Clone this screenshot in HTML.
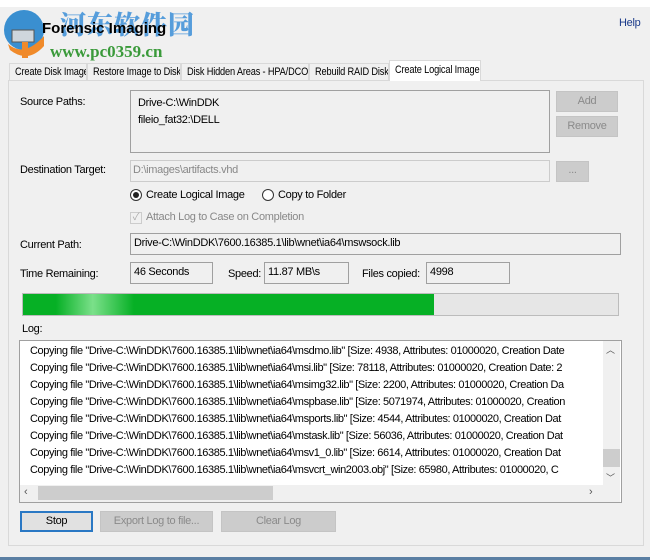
<!DOCTYPE html>
<html><head><meta charset="utf-8"><style>
*{box-sizing:border-box;margin:0;padding:0}
body{width:650px;height:560px;background:#f0f0f0;font-family:"Liberation Sans","Noto Sans CJK SC",sans-serif;font-size:11px;color:#000;position:relative;overflow:hidden;letter-spacing:-0.3px}
.a{position:absolute;white-space:nowrap}
.box{position:absolute;border:1px solid #a0a0a0;background:#f0f0f0}
.btn{position:absolute;background:#cccccc;border:1px solid #c4c4c4;color:#8a8a8a;text-align:center}
.tab{position:absolute;top:63px;height:18px;border:1px solid #d9d9d9;border-bottom:none;background:#f0f0f0;padding:2px 0 0 5px;white-space:nowrap;overflow:hidden}
.tab span{display:inline-block;transform:scaleX(.84);transform-origin:left;letter-spacing:-0.2px}
.log div{height:17px;line-height:17px;padding-left:10px;white-space:nowrap}
</style></head><body>
<div class="a" style="left:0;top:0;width:650px;height:7px;background:#fff"></div>
<svg class="a" style="left:2px;top:6px" width="48" height="56"><circle cx="22" cy="24" r="20" fill="#3a8fd0"/><path d="M6 38 Q22 52 42 30 L42 40 Q26 58 8 44Z" fill="#f08a2a"/><rect x="10" y="24" width="22" height="12" fill="#cfd6dc" stroke="#555"/><rect x="20" y="36" width="6" height="16" fill="#f08a2a"/></svg>
<div class="a" style="left:60px;top:5px;font-family:'Noto Serif CJK SC',serif;font-weight:900;font-size:26px;color:#3c8fd8;letter-spacing:1px;opacity:.85">河东软件园</div>
<div class="a" style="left:42px;top:20px;font-size:15px;font-weight:bold;letter-spacing:0">Forensic Imaging</div>
<div class="a" style="left:50px;top:42px;font-family:'Liberation Serif',serif;font-weight:bold;font-size:17px;color:#3a9a3a;letter-spacing:0">www.pc0359.cn</div>
<div class="a" style="left:619px;top:17px;color:#1a3a8a">Help</div>
<div class="tab" style="left:9px;width:78px"><span>Create Disk Image</span></div>
<div class="tab" style="left:87px;width:94px"><span>Restore Image to Disk</span></div>
<div class="tab" style="left:181px;width:128px"><span>Disk Hidden Areas - HPA/DCO</span></div>
<div class="tab" style="left:309px;width:80px"><span>Rebuild RAID Disk</span></div>
<div class="tab" style="left:389px;width:92px;top:60px;height:21px;background:#fff;z-index:2;padding-top:3px"><span>Create Logical Image</span></div>
<div class="a" style="left:8px;top:80px;width:636px;height:466px;border:1px solid #d9d9d9;background:#f0f0f0"></div>
<div class="a" style="left:20px;top:96px">Source Paths:</div>
<div class="box" style="left:130px;top:90px;width:420px;height:63px;padding:4px 7px;line-height:17px">Drive-C:\WinDDK<br>fileio_fat32:\DELL</div>
<div class="btn" style="left:556px;top:91px;width:62px;height:21px;line-height:19px">Add</div>
<div class="btn" style="left:556px;top:116px;width:62px;height:21px;line-height:19px">Remove</div>
<div class="a" style="left:20px;top:164px">Destination Target:</div>
<div class="box" style="left:130px;top:160px;width:420px;height:22px;border-color:#ccc;color:#888;padding:3px 2px">D:\images\artifacts.vhd</div>
<div class="btn" style="left:556px;top:161px;width:33px;height:21px;line-height:17px">...</div>
<div class="a" style="left:130px;top:189px;width:12px;height:12px;border:1px solid #333;border-radius:50%;background:#fff"></div>
<div class="a" style="left:133px;top:192px;width:6px;height:6px;border-radius:50%;background:#222"></div>
<div class="a" style="left:146px;top:189px">Create Logical Image</div>
<div class="a" style="left:262px;top:189px;width:12px;height:12px;border:1px solid #333;border-radius:50%;background:#fff"></div>
<div class="a" style="left:278px;top:189px">Copy to Folder</div>
<div class="a" style="left:130px;top:212px;width:12px;height:12px;border:1px solid #ccc;color:#aaa;font-size:10px;line-height:10px;text-align:center">✓</div>
<div class="a" style="left:146px;top:211px;color:#888">Attach Log to Case on Completion</div>
<div class="a" style="left:20px;top:239px">Current Path:</div>
<div class="box" style="left:130px;top:233px;width:491px;height:22px;padding:3px 3px">Drive-C:\WinDDK\7600.16385.1\lib\wnet\ia64\mswsock.lib</div>
<div class="a" style="left:20px;top:268px">Time Remaining:</div>
<div class="box" style="left:130px;top:262px;width:83px;height:22px;padding:3px 3px">46 Seconds</div>
<div class="a" style="left:228px;top:268px">Speed:</div>
<div class="box" style="left:264px;top:262px;width:85px;height:22px;padding:3px 3px">11.87 MB\s</div>
<div class="a" style="left:362px;top:268px">Files copied:</div>
<div class="box" style="left:426px;top:262px;width:84px;height:22px;padding:3px 3px">4998</div>
<div class="a" style="left:22px;top:293px;width:597px;height:23px;border:1px solid #bcbcbc;background:#e6e6e6"></div>
<div class="a" style="left:23px;top:294px;width:411px;height:21px;background:linear-gradient(90deg,#06b025 0%,#06b025 8%,#7be08a 17%,#06b025 27%,#06b025 100%)"></div>
<div class="a" style="left:22px;top:323px">Log:</div>
<div class="a log" style="left:19px;top:340px;width:603px;height:163px;border:1px solid #a0a0a0;background:#fff;padding-top:2px;overflow:hidden;letter-spacing:-0.4px">
<div>Copying file "Drive-C:\WinDDK\7600.16385.1\lib\wnet\ia64\msdmo.lib" [Size: 4938, Attributes: 01000020, Creation Date</div>
<div>Copying file "Drive-C:\WinDDK\7600.16385.1\lib\wnet\ia64\msi.lib" [Size: 78118, Attributes: 01000020, Creation Date: 2</div>
<div>Copying file "Drive-C:\WinDDK\7600.16385.1\lib\wnet\ia64\msimg32.lib" [Size: 2200, Attributes: 01000020, Creation Da</div>
<div>Copying file "Drive-C:\WinDDK\7600.16385.1\lib\wnet\ia64\mspbase.lib" [Size: 5071974, Attributes: 01000020, Creation</div>
<div>Copying file "Drive-C:\WinDDK\7600.16385.1\lib\wnet\ia64\msports.lib" [Size: 4544, Attributes: 01000020, Creation Dat</div>
<div>Copying file "Drive-C:\WinDDK\7600.16385.1\lib\wnet\ia64\mstask.lib" [Size: 56036, Attributes: 01000020, Creation Dat</div>
<div>Copying file "Drive-C:\WinDDK\7600.16385.1\lib\wnet\ia64\msv1_0.lib" [Size: 6614, Attributes: 01000020, Creation Dat</div>
<div>Copying file "Drive-C:\WinDDK\7600.16385.1\lib\wnet\ia64\msvcrt_win2003.obj" [Size: 65980, Attributes: 01000020, C</div>
</div>
<div class="a" style="left:603px;top:341px;width:17px;height:144px;background:#f0f0f0"></div>
<div class="a" style="left:606px;top:343px;font-size:9px;color:#555">︿</div>
<div class="a" style="left:603px;top:449px;width:17px;height:18px;background:#cdcdcd"></div>
<div class="a" style="left:606px;top:471px;font-size:9px;color:#555">﹀</div>
<div class="a" style="left:20px;top:485px;width:600px;height:17px;background:#f0f0f0"></div>
<div class="a" style="left:38px;top:486px;width:235px;height:14px;background:#cdcdcd"></div>
<div class="a" style="left:24px;top:486px;color:#555">&lsaquo;</div>
<div class="a" style="left:589px;top:486px;color:#555">&rsaquo;</div>
<div class="a" style="left:20px;top:511px;width:73px;height:21px;border:2px solid #2a78c4;background:#e1e1e1;text-align:center;line-height:17px">Stop</div>
<div class="btn" style="left:100px;top:511px;width:113px;height:21px;line-height:19px">Export Log to file...</div>
<div class="btn" style="left:221px;top:511px;width:115px;height:21px;line-height:19px">Clear Log</div>
<div class="a" style="left:0;top:557px;width:650px;height:3px;background:#5a7fa3"></div>
</body></html>
